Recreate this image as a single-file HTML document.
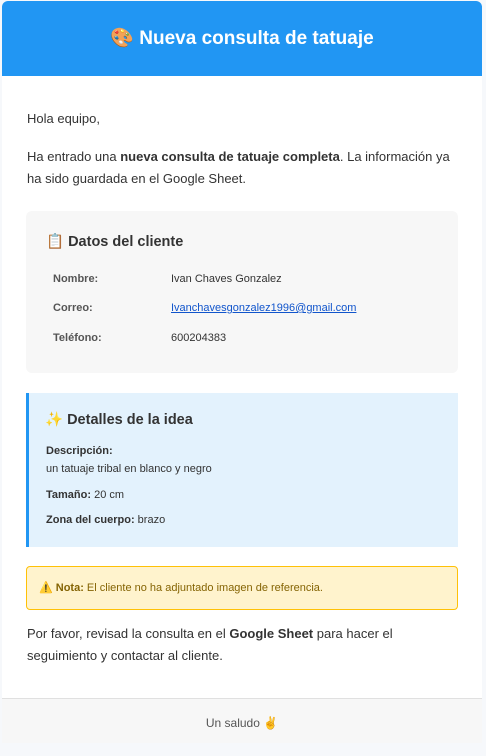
<!DOCTYPE html>
<html><head><meta charset="utf-8"><style>
*{margin:0;padding:0;box-sizing:border-box}
body{width:486px;height:756px;background:#f6f8fb;font-family:"Liberation Sans",Arial,sans-serif;color:#333;overflow:hidden;position:relative}
.c{position:absolute;left:2px;top:1px;width:480px;height:742px;background:#fff;border-radius:6px 6px 0 0;overflow:hidden}
.h{height:75px;background:#2196F3;color:#fff;font-size:19px;font-weight:bold;text-align:center;line-height:75px}
p{font-size:13px;line-height:22px;color:#333}
.box1{position:absolute;left:24px;top:210px;width:432px;height:162px;background:#f7f7f7;border-radius:6px}
.box2{position:absolute;left:24px;top:392px;width:432px;height:154px;background:#e3f2fd;border-left:3px solid #2196F3}
h3{font-size:14.5px;font-weight:bold;color:#333;position:absolute}
.t{position:absolute;font-size:11px;color:#333}
.lb{font-weight:bold;color:#555}
.nota{position:absolute;left:24px;top:565px;width:432px;height:44px;background:#fff3cd;border:1px solid #ffc107;border-radius:4px;font-size:11px;color:#856404;line-height:42px;padding-left:12px}
.f{position:absolute;left:0;top:697px;width:480px;height:45px;background:#f7f7f7;border-top:1px solid #e0e0e0;text-align:center;font-size:12px;color:#555;line-height:48px}
</style></head><body>
<div class="c">
<div class="h">🎨 Nueva consulta de tatuaje</div>
<p style="position:absolute;left:25px;top:107px">Hola equipo,</p>
<p style="position:absolute;left:25px;top:145px;width:432px">Ha entrado una <b>nueva consulta de tatuaje completa</b>. La información ya ha sido guardada en el Google Sheet.</p>
<div class="box1">
<h3 style="left:20px;top:22px">📋 Datos del cliente</h3>
<div class="t lb" style="left:27px;top:62px">Nombre:</div><div class="t" style="left:145px;top:62px">Ivan Chaves Gonzalez</div>
<div class="t lb" style="left:27px;top:91px">Correo:</div><div class="t" style="left:145px;top:91px;text-decoration:underline;color:#1155cc">Ivanchavesgonzalez1996@gmail.com</div>
<div class="t lb" style="left:27px;top:121px">Teléfono:</div><div class="t" style="left:145px;top:121px">600204383</div>
</div>
<div class="box2">
<h3 style="left:16px;top:18px">✨ Detalles de la idea</h3>
<div class="t" style="left:17px;top:52px"><b>Descripción:</b></div>
<div class="t" style="left:17px;top:70px">un tatuaje tribal en blanco y negro</div>
<div class="t" style="left:17px;top:96px"><b>Tamaño:</b> 20 cm</div>
<div class="t" style="left:17px;top:121px"><b>Zona del cuerpo:</b> brazo</div>
</div>
<div class="nota">⚠️ <b>Nota:</b> El cliente no ha adjuntado imagen de referencia.</div>
<p style="position:absolute;left:25px;top:622px;width:432px">Por favor, revisad la consulta en el <b>Google Sheet</b> para hacer el seguimiento y contactar al cliente.</p>
<div class="f">Un saludo ✌️</div>
</div>
</body></html>
